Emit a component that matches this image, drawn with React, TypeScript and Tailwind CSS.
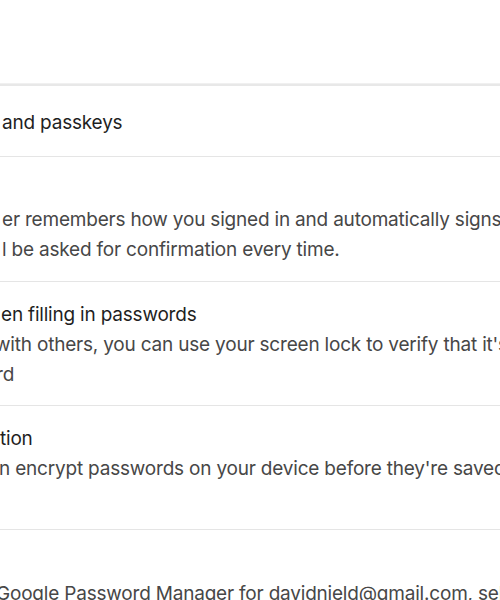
import React from 'react'

const font = { fontFamily: 'Inter, "Noto Sans", sans-serif' }

function Divider() {
  return <div className="h-px bg-[#e5e5e5]" />
}

export default function App() {
  return (
    <div className="h-[600px] w-[500px] overflow-hidden bg-white text-[19px] leading-[30px] tracking-[-0.2px] text-[#1f1f1f]" style={font}>
      <div className="h-[83px]" />
      <div className="h-[3px] border-t border-[#f0f0f0] bg-[#e8e8e8]" />

      <div className="flex h-[70px] items-center whitespace-nowrap pt-[3px]">
        <span className="ml-[2px]">and passkeys</span>
      </div>
      <Divider />

      <div className="whitespace-nowrap pb-[16px] pt-[18px]">
        <div className="h-[30px]" />
        <div className="text-[#474747]">
          <div className="ml-[2px]">er remembers how you signed in and automatically signs you in</div>
          <div className="ml-[2px]">l be asked for confirmation every time.</div>
        </div>
      </div>
      <Divider />

      <div className="whitespace-nowrap pb-[15px] pt-[18px]">
        <div className="ml-[1px]">en filling in passwords</div>
        <div className="text-[#474747]">
          <div className="-ml-[5px]">with others, you can use your screen lock to verify that it's you</div>
          <div className="-ml-[4px]">rd</div>
        </div>
      </div>
      <Divider />

      <div className="h-[123px] whitespace-nowrap pt-[18px]">
        <div>tion</div>
        <div className="-ml-[1px] text-[#474747]">n encrypt passwords on your device before they're saved to Google</div>
      </div>
      <Divider />

      <div className="whitespace-nowrap pt-[49px] text-[#474747]">
        <div className="-ml-[4px]">Google Password Manager for davidnield@gmail.com, select</div>
      </div>
    </div>
  )
}
